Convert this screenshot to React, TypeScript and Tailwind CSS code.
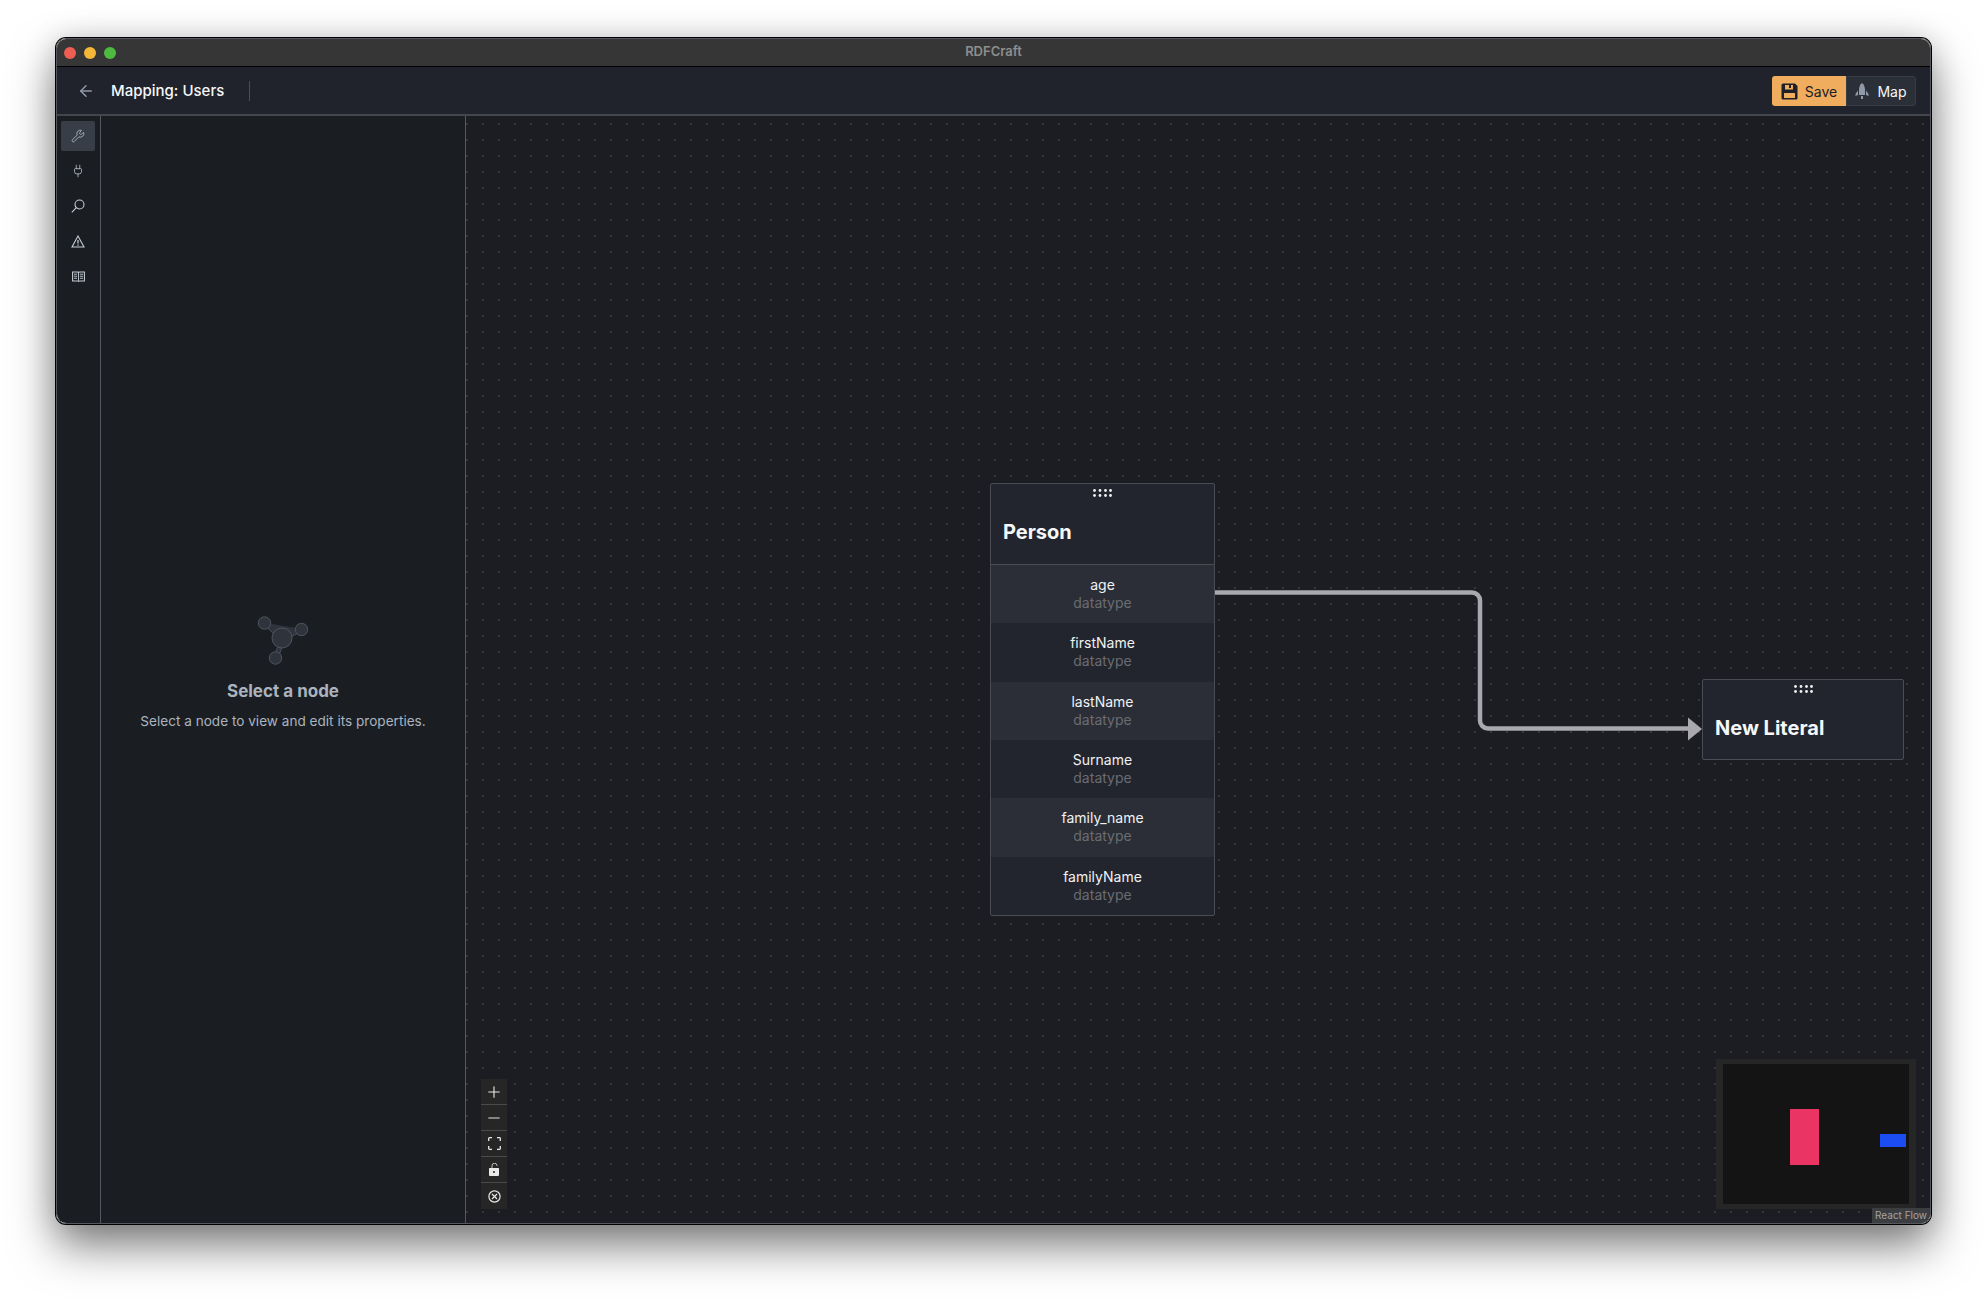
import { ArrowLeft, Wrench, Plug, Plus, Minus } from "lucide-react";

const rows = ["age", "firstName", "lastName", "Surname", "family_name", "familyName"];

function Grip() {
  return (
    <svg width="19" height="8" viewBox="0 0 19 8" className="fill-[#f0f1f3]">
      {[1.5, 7, 12.5, 17.5].map((x) => (
        <g key={x}>
          <circle cx={x} cy="1.5" r="1.4" />
          <circle cx={x} cy="6.5" r="1.4" />
        </g>
      ))}
    </svg>
  );
}

function SaveIcon() {
  return (
    <svg width="17" height="17" viewBox="0 0 17 17" className="fill-[#1c2127]">
      <path
        fillRule="evenodd"
        d="M1.5 0.5H14l2.5 2.5v12a1.5 1.5 0 0 1-1.5 1.5H2A1.5 1.5 0 0 1 .5 15V2A1.5 1.5 0 0 1 2 .5zM4 2v4.5h8V2h-2v3H8V2zM3 10v5h11v-5z"
      />
    </svg>
  );
}

function RocketIcon() {
  return (
    <svg width="14" height="16" viewBox="0 0 14 16" className="fill-[#8f99a8]">
      <path d="M7 0C5 1.6 4 4 4 6.5V12h6V6.5C10 4 9 1.6 7 0z" />
      <path d="M3 7.5L0.5 11v2L3 12zM11 7.5l2.5 3.5v2L11 12zM6 13h2v3H6z" />
    </svg>
  );
}

function NodeGraphic() {
  return (
    <svg width="52" height="50" viewBox="0 0 52 50" className="fill-[#2f343c] stroke-[#4f5560]" strokeWidth="1">
      <path d="M8 8L26 24L44 14M26 24L19 42" strokeWidth="5" className="stroke-[#4f5560]" />
      <path d="M8 8L26 24L44 14M26 24L19 42" strokeWidth="3.5" className="stroke-[#2f343c]" />
      <circle cx="7.5" cy="8" r="6.2" />
      <circle cx="44.5" cy="14.5" r="6.2" />
      <circle cx="18.5" cy="43" r="6.2" />
      <circle cx="25" cy="23" r="10" />
    </svg>
  );
}

function SearchIcon() {
  return (
    <svg width="14" height="14" viewBox="0 0 14 14" fill="none" stroke="currentColor" strokeWidth="1.1">
      <circle cx="8.5" cy="5.5" r="4.5" />
      <path d="M5.3 8.7L.8 13.3" />
    </svg>
  );
}

function WarningIcon() {
  return (
    <svg width="14" height="13" viewBox="0 0 14 13" fill="none" stroke="currentColor" strokeWidth="1.1">
      <path d="M7 1L13 12H1z" strokeLinejoin="miter" />
      <path d="M7 5v3.5M7 9.5v1.3" strokeWidth="1.3" />
    </svg>
  );
}

function BookIcon() {
  return (
    <svg width="13" height="11" viewBox="0 0 14 11" fill="none" stroke="currentColor" strokeWidth="1.1">
      <path d="M.6.6H6a1 1 0 0 1 1 1a1 1 0 0 1 1-1h5.4v9.8H8a1 1 0 0 0-1 .4a1 1 0 0 0-1-.4H.6z" />
      <path d="M7 1.5V10M2 3h3.5M2 5.2h3.5M2 7.4h3.5M8.5 3H12M8.5 5.2H12M8.5 7.4H12" strokeWidth="1" />
    </svg>
  );
}

export default function App() {
  return (
    <div className="min-h-[1298px] bg-white pl-[56px] pt-[38px] font-['Inter',sans-serif]">
      <div className="flex h-[1186px] w-[1875px] flex-col overflow-hidden rounded-[10px] border border-[#55585e] shadow-[0_0_0_1px_#000,0_22px_45px_rgba(0,0,0,0.5),0_0_30px_rgba(0,0,0,0.15)]">
        {/* title bar */}
        <div className="relative flex h-[28px] shrink-0 items-center border-b border-black bg-[#363636] pl-[7px]">
          <div className="flex gap-[8px]">
            <span className="h-3 w-3 rounded-full bg-[#ec5f52]" />
            <span className="h-3 w-3 rounded-full bg-[#f4b739]" />
            <span className="h-3 w-3 rounded-full bg-[#4cbb3f]" />
          </div>
          <span className="absolute inset-x-0 -mt-px text-center text-[13px] font-semibold text-[#8d8d8d]">RDFCraft</span>
        </div>

        {/* header */}
        <div className="flex h-[49px] shrink-0 items-center border-b-2 border-[#43464c] bg-[#20232b] pt-[1px] pr-[14px] pl-[20px]">
          <ArrowLeft size={18} strokeWidth={2} className="text-[#8f99a8]" />
          <span className="ml-[16px] text-[15px] font-medium text-[#f6f7f9]">Mapping: Users</span>
          <span className="ml-[25px] h-[20px] w-px bg-[#4a4e55]" />
          <div className="ml-auto flex h-[30px]">
            <button className="flex w-[74px] items-center justify-center gap-[7px] rounded-l-[3px] bg-[#f0ad5d] text-[14px] text-[#1c2127]">
              <SaveIcon />
              Save
            </button>
            <button className="flex w-[70px] items-center justify-center gap-[8px] rounded-r-[3px] border border-[#383c44] bg-[#2b2f38] text-[14px] font-normal text-[#f6f7f9]">
              <RocketIcon />
              Map
            </button>
          </div>
        </div>

        <div className="flex min-h-0 flex-1">
          {/* icon rail */}
          <div className="flex w-[44px] shrink-0 flex-col gap-[5px] border-r border-[#55585e] bg-[#1a1e23] px-[4px] pt-[5px] text-[#c5cbd3]">
            <div className="flex h-[30px] w-[34px] items-center justify-center rounded-[2px] bg-[#383e47]">
              <Wrench size={14} strokeWidth={1.3} />
            </div>
            <div className="flex h-[30px] w-[34px] items-center justify-center">
              <Plug size={14} strokeWidth={1.3} />
            </div>
            <div className="flex h-[30px] w-[34px] items-center justify-center">
              <SearchIcon />
            </div>
            <div className="flex h-[30px] w-[34px] items-center justify-center">
              <WarningIcon />
            </div>
            <div className="flex h-[30px] w-[34px] items-center justify-center">
              <BookIcon />
            </div>
          </div>

          {/* properties panel */}
          <div className="flex w-[365px] shrink-0 flex-col items-center justify-center border-r border-[#55585e] bg-[#1a1e23] pt-[7px]">
            <NodeGraphic />
            <h2 className="mt-[14px] text-[17px] font-bold text-[#abb3bf]">Select a node</h2>
            <p className="mt-[7px] text-[13.6px] text-[#abb3bf]">Select a node to view and edit its properties.</p>
          </div>

          {/* canvas */}
          <div className="relative min-w-0 flex-1 overflow-hidden bg-[#1b1d23] bg-[radial-gradient(circle,#4a4e55_0.5px,transparent_0.9px)] bg-[size:16px_16px] bg-[position:-7px_0px]">
            <svg className="absolute inset-0 h-full w-full" fill="none">
              <path
                d="M749 476.5H1006a8 8 0 0 1 8 8V604.5a8 8 0 0 0 8 8H1224"
                stroke="#a8a8ae"
                strokeWidth="4.5"
              />
              <path d="M1222 601.5L1236 613L1222 624.5z" fill="#a8a8ae" />
            </svg>

            {/* Person node */}
            <div className="absolute top-[367px] left-[524px] w-[225px] rounded-[2px] border border-[#494c53] bg-[#22252d]">
              <div className="flex h-[81px] flex-col items-center border-b border-[#494c53] pt-[5px]">
                <Grip />
                <div className="mt-[21px] self-start pl-[12px] text-[20px] leading-[28px] font-bold text-[#f6f7f9]">Person</div>
              </div>
              {rows.map((name, i) => (
                <div
                  key={name}
                  className={
                    i % 2 === 0
                      ? "flex h-[58.33px] flex-col items-center justify-center bg-[#2b2e36] text-[14px] leading-[18px]"
                      : "flex h-[58.33px] flex-col items-center justify-center text-[14px] leading-[18px]"
                  }
                >
                  <span className="text-[#f0f1f3]">{name}</span>
                  <span className="text-[#6a6c72]">datatype</span>
                </div>
              ))}
            </div>

            {/* literal node */}
            <div className="absolute top-[563px] left-[1236px] flex h-[81px] w-[202px] flex-col items-center rounded-[2px] border border-[#494c53] bg-[#22252d] pt-[5px]">
              <Grip />
              <div className="mt-[21px] self-start pl-[12px] text-[20px] leading-[28px] font-bold text-[#f6f7f9]">New Literal</div>
            </div>

            {/* zoom controls */}
            <div className="absolute top-[963px] left-[15px] flex w-[26px] flex-col divide-y divide-[#4a4a4a] bg-[#262626] text-[#e8e8e8]">
              <button className="flex h-[26px] items-center justify-center">
                <Plus size={18} strokeWidth={1.5} />
              </button>
              <button className="flex h-[26px] items-center justify-center">
                <Minus size={18} strokeWidth={1.3} />
              </button>
              <button className="flex h-[26px] items-center justify-center">
                <svg width="13" height="13" viewBox="0 0 13 13" fill="none" stroke="currentColor" strokeWidth="1.3">
                  <path d="M.7 4V1.5a.8.8 0 0 1 .8-.8H4M9 .7h2.5a.8.8 0 0 1 .8.8V4M12.3 9v2.5a.8.8 0 0 1-.8.8H9M4 12.3H1.5a.8.8 0 0 1-.8-.8V9" />
                </svg>
              </button>
              <button className="flex h-[26px] items-center justify-center">
                <svg width="10" height="13" viewBox="0 0 10 13" fill="currentColor">
                  <path fillRule="evenodd" d="M.5 5H9.5a.5.5 0 0 1 .5.5V12a1 1 0 0 1-1 1H1a1 1 0 0 1-1-1V5.5A.5.5 0 0 1 .5 5zM5 8a1 1 0 1 0 0 2a1 1 0 0 0 0-2z" />
                  <path d="M3 5V3A2.5 2.5 0 0 1 8 2.5V3" fill="none" stroke="currentColor" strokeWidth=".8" />
                </svg>
              </button>
              <button className="flex h-[26px] items-center justify-center">
                <svg width="13" height="13" viewBox="0 0 13 13" fill="none" stroke="currentColor" strokeWidth="1.2">
                  <circle cx="6.5" cy="6.5" r="5.6" />
                  <path d="M4 4l5 5M9 4l-5 5" />
                </svg>
              </button>
            </div>

            {/* minimap */}
            <div className="absolute top-[943px] left-[1250px] h-[150px] w-[200px] border-x-[7px] border-y-[5px] border-[#262626] bg-[#141414]">
              <div className="absolute top-[45px] left-[67px] h-[56px] w-[29px] bg-[#ea3564]" />
              <div className="absolute top-[70px] left-[157px] h-[13px] w-[26px] bg-[#1c4df2]" />
            </div>

            {/* attribution */}
            <div className="absolute right-0 bottom-0 bg-[#3c3d41] px-[3px] text-[10px] leading-[15px] text-[#a3a3a3]">React Flow</div>
          </div>
        </div>
      </div>
    </div>
  );
}
